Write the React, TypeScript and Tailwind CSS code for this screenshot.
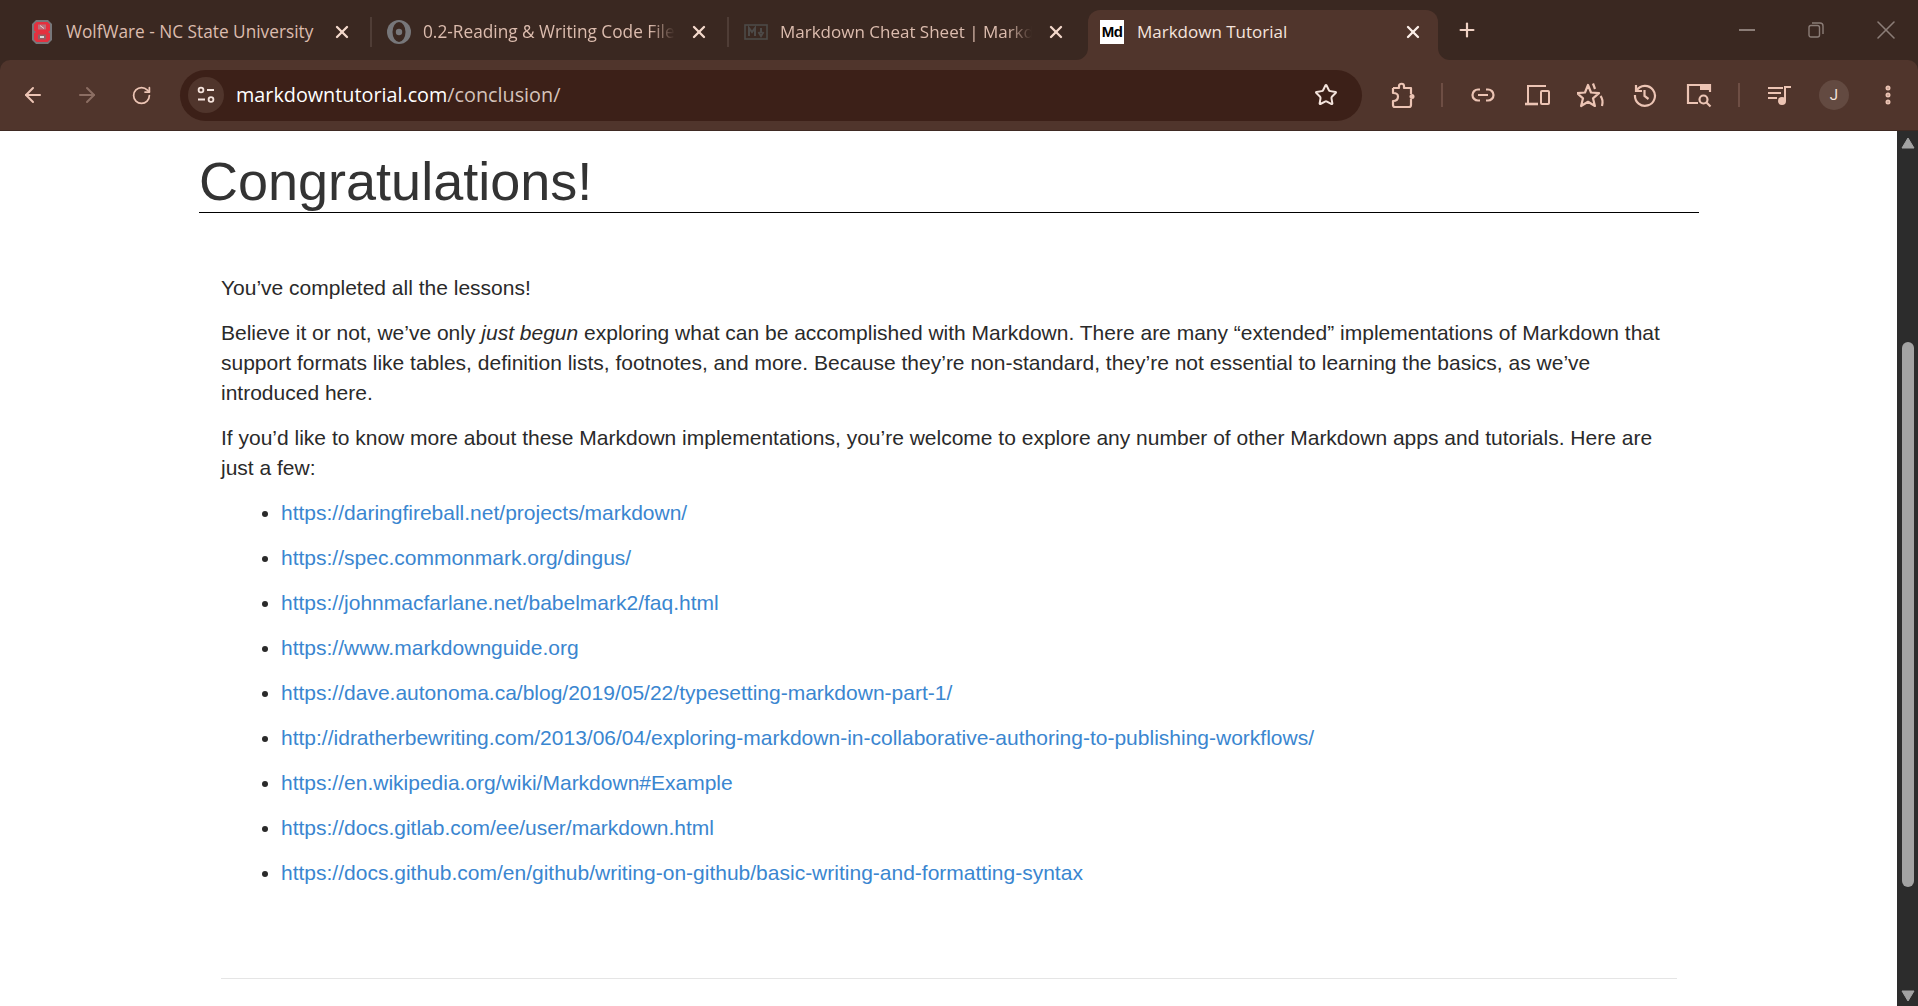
import { ArrowLeft, ArrowRight, RotateCw, X, Plus, Star, EllipsisVertical } from "lucide-react";
import type { ReactNode } from "react";

const links = [
  "https://daringfireball.net/projects/markdown/",
  "https://spec.commonmark.org/dingus/",
  "https://johnmacfarlane.net/babelmark2/faq.html",
  "https://www.markdownguide.org",
  "https://dave.autonoma.ca/blog/2019/05/22/typesetting-markdown-part-1/",
  "http://idratherbewriting.com/2013/06/04/exploring-markdown-in-collaborative-authoring-to-publishing-workflows/",
  "https://en.wikipedia.org/wiki/Markdown#Example",
  "https://docs.gitlab.com/ee/user/markdown.html",
  "https://docs.github.com/en/github/writing-on-github/basic-writing-and-formatting-syntax",
];

function NcStateIcon() {
  return (
    <svg width="20" height="24" viewBox="0 0 20 24">
      <path d="M4 0h12l4 4v16l-4 4H4l-4-4V4z" fill="#77777a" />
      <path d="M4.5 2h11l2.5 2.5v6L16 12l2 1.5v6L15.5 22h-11L2 19.5v-6L4 12l-2-1.500v-6z" fill="#e4303f" />
      <rect x="6" y="4.5" width="8" height="5" fill="#b8707a" />
      <rect x="6" y="14.5" width="8" height="5" fill="#8f6065" />
      <rect x="8" y="16" width="4" height="2" fill="#d9d9d9" />
      <path d="M8 5.500l4 3" stroke="#e8d0d2" strokeWidth="1" />
    </svg>
  );
}

function RingIcon() {
  return (
    <svg width="24" height="24" viewBox="0 0 24 24">
      <circle cx="12" cy="12" r="12" fill="#77777a" />
      <ellipse cx="12" cy="12" rx="6.5" ry="10" fill="#3a2821" />
      <circle cx="12" cy="12" r="3.2" fill="#77777a" />
    </svg>
  );
}

function MdIcon() {
  return (
    <svg width="24" height="16" viewBox="0 0 24 16" fill="none" stroke="#4d4a48" strokeWidth="1.6">
      <rect x="1" y="1" width="22" height="14" />
      <path d="M5 12V4l3 4 3-4v8" strokeWidth="2" />
      <path d="M17 4v5M14.5 8 17 12l2.5-4" strokeWidth="2" />
    </svg>
  );
}

function MdActiveIcon() {
  return (
    <div className="w-6 h-6 bg-white flex items-center justify-center text-black text-[15px] font-bold tracking-[-0.5px] [font-family:'Liberation_Sans',sans-serif]">
      Md
    </div>
  );
}

function Tab({ icon, title, sep, fade, size }: { icon: ReactNode; title: string; sep?: boolean; fade?: boolean; size: string }) {
  return (
    <div className="flex items-center w-[357px] h-[50px] shrink-0 pb-[6px]">
      <div className="w-[28px] flex justify-center shrink-0">{icon}</div>
      <span
        className={
          "text-[#dcbcae] whitespace-nowrap overflow-hidden w-[252px] ml-[10px] " +
          size +
          (fade ? " [mask-image:linear-gradient(to_right,black_90%,transparent)]" : "")
        }
      >
        {title}
      </span>
      <X size={20} strokeWidth={2.8} className="text-[#f3d8cb] ml-[14px] shrink-0" />
      {sep && <div className="w-[2px] h-[30px] bg-[#4f3d36] ml-[18px] shrink-0" />}
    </div>
  );
}

function ToolIcon({ children }: { children: ReactNode }) {
  return <div className="w-[54px] h-[40px] flex items-center justify-center shrink-0 text-[#ecc4b4]">{children}</div>;
}

function Sep() {
  return <div className="w-[2px] h-[24px] bg-[#6e4e44] shrink-0" />;
}

export default function App() {
  return (
    <div className="h-[1006px] w-[1918px] overflow-hidden flex flex-col bg-white [font-family:'Open_Sans',sans-serif]">
      {/* tab strip */}
      <div className="h-[60px] bg-[#3a2821] flex items-end pl-[28px] shrink-0">
        <Tab icon={<NcStateIcon />} title="WolfWare - NC State University" sep size="text-[17.25px]" />
        <Tab icon={<RingIcon />} title="0.2-Reading & Writing Code Files" sep fade size="text-[17.25px]" />
        <Tab icon={<MdIcon />} title="Markdown Cheat Sheet | Markdown Guide" fade size="text-[17px]" />
        <div className="relative h-[50px] w-[350px] bg-[#50352c] rounded-t-[12px] flex items-center pl-[12px] pb-[6px] -ml-[11px] shrink-0">
          <svg width="12" height="12" viewBox="0 0 12 12" className="absolute bottom-0 -left-[12px]">
            <path d="M12 0V12H0A12 12 0 0 0 12 0z" fill="#50352c" />
          </svg>
          <MdActiveIcon />
          <span className="text-[#f5e4dd] text-[17px] ml-[13px] w-[266px]">Markdown Tutorial</span>
          <X size={20} strokeWidth={2.8} className="text-[#fbeee8]" />
          <svg width="12" height="12" viewBox="0 0 12 12" className="absolute bottom-0 -right-[12px]">
            <path d="M0 0V12H12A12 12 0 0 1 0 0z" fill="#50352c" />
          </svg>
        </div>
        <Plus size={22} strokeWidth={2.4} className="text-[#f0d2c5] ml-[18px] mb-[19px]" />
        <div className="ml-auto flex items-center h-[60px]">
          <svg width="16" height="2" viewBox="0 0 16 2" className="mr-[53px]"><rect width="16" height="2" fill="#8b7d77" /></svg>
          <svg width="16" height="16" viewBox="0 0 16 16" fill="none" stroke="#8b7d77" strokeWidth="1.4" className="mr-[46px]">
            <rect x="1" y="3.5" width="10.5" height="11.5" rx="2" />
            <path d="M4 1h8a3 3 0 0 1 3 3v8" />
          </svg>
          <X size={32} strokeWidth={1.2} className="mr-[16px] text-[#8b7d77]" />
        </div>
      </div>

      {/* toolbar */}
      <div className="h-[71px] shrink-0 bg-[#3a2821]">
        <div className="h-[71px] bg-[#50352c] rounded-t-[10px] border-b border-[#3f2a23] flex items-center pl-[6px]">
          <ToolIcon><ArrowLeft size={24} strokeWidth={2} /></ToolIcon>
          <ToolIcon><ArrowRight size={24} strokeWidth={2} className="text-[#8c6e63]" /></ToolIcon>
          <ToolIcon><RotateCw size={21} strokeWidth={2} /></ToolIcon>
          <div className="ml-[12px] w-[1182px] h-[51px] rounded-full bg-[#3c2018] flex items-center pl-[8px] shrink-0">
            <div className="w-[36px] h-[36px] rounded-full bg-[#50352c] flex items-center justify-center">
              <svg width="20" height="20" viewBox="0 0 20 20" fill="none" stroke="#f5e4dd" strokeWidth="1.8">
                <circle cx="5" cy="5" r="2.4" />
                <path d="M11 5h7M2 14.5h7" />
                <circle cx="15" cy="14.5" r="2.4" />
              </svg>
            </div>
            <span className="ml-[12px] text-[19.8px] text-white">
              markdowntutorial.com<span className="text-[#d5c3bb]">/conclusion/</span>
            </span>
            <Star size={24} strokeWidth={2} className="text-[#f3e3dc] ml-auto mr-[24px]" />
          </div>
          <div className="ml-[14px]">
            <ToolIcon>
              <svg width="26" height="28" viewBox="0 0 26 28" fill="none" stroke="currentColor" strokeWidth="2.2" strokeLinejoin="round">
                <path d="M3 7h6V5c0-3 5-3 5 0v2h7v6" />
                <path d="M21 18v6a2 2 0 0 1-2 2H5a2 2 0 0 1-2-2v-4c4 0 5-2 5-4.500S7 12 3 12V7" />
                <circle cx="22" cy="15.500" r="2.500" fill="currentColor" stroke="none" />
              </svg>
            </ToolIcon>
          </div>
          <div className="w-[11px]" />
          <Sep />
          <div className="w-[13px]" />
          <ToolIcon>
            <svg width="24" height="14" viewBox="0 0 24 14" fill="none" stroke="currentColor" strokeWidth="2.2">
              <path d="M9 1.5H7a5.5 5.5 0 0 0 0 11h2M15 1.5h2a5.5 5.5 0 0 1 0 11h-2M7 7h10" />
            </svg>
          </ToolIcon>
          <ToolIcon>
            <svg width="25" height="22" viewBox="0 0 25 22" fill="none" stroke="currentColor" strokeWidth="2">
              <path d="M3 19V2h18" />
              <path d="M0 20h13" strokeWidth="2.6" />
              <rect x="16" y="7" width="8" height="13" rx="1" />
            </svg>
          </ToolIcon>
          <ToolIcon>
            <svg width="28" height="28" viewBox="0 0 28 28" fill="none" stroke="currentColor" strokeWidth="2.200" strokeLinejoin="round">
              <path d="M11 4l3 7.500 8 .6-6 5.200 1.900 7.700-6.900-4.200-6.900 4.200 1.900-7.700-6-5.200 8-.6z" />
              <path d="M16 2.500l2 5.500M23.500 15c2.500 3 2.500 6 1.500 10" />
            </svg>
          </ToolIcon>
          <ToolIcon>
            <svg width="24" height="24" viewBox="0 0 24 24" fill="none" stroke="currentColor" strokeWidth="2.2">
              <path d="M3.5 7.5A10 10 0 1 1 2 12" />
              <path d="M3 2v6h6" />
              <path d="M11.5 7v6l4 3" />
            </svg>
          </ToolIcon>
          <ToolIcon>
            <svg width="26" height="26" viewBox="0 0 26 26" fill="none" stroke="currentColor" strokeWidth="2.2">
              <path d="M12 21H2V3h22v7" />
              <rect x="14" y="2" width="10" height="6" fill="currentColor" stroke="none" />
              <circle cx="17.5" cy="17.5" r="4" />
              <path d="M20.5 20.5l4 4" />
            </svg>
          </ToolIcon>
          <div className="w-[12px]" />
          <Sep />
          <div className="w-[13px]" />
          <ToolIcon>
            <svg width="24" height="22" viewBox="0 0 24 22" fill="none" stroke="currentColor" strokeWidth="2">
              <path d="M0 4h15M0 9h13M0 14h9" />
              <path d="M17 17V3h6" />
              <circle cx="14" cy="17" r="4" fill="currentColor" stroke="none" />
            </svg>
          </ToolIcon>
          <ToolIcon>
            <div className="w-[30px] h-[30px] rounded-full bg-[#634a41] flex items-center justify-center text-[#f3e3dc] text-[15px] [font-family:'Roboto',sans-serif]">J</div>
          </ToolIcon>
          <ToolIcon>
            <EllipsisVertical size={24} strokeWidth={3} />
          </ToolIcon>
        </div>
      </div>

      {/* page + scrollbar */}
      <div className="flex-1 flex min-h-0 [font-family:'Liberation_Sans',sans-serif]">
        <div className="flex-1 min-w-0 pl-[199px]">
          <div className="w-[1500px]">
            <h1 className="text-[54px] pt-[10px] leading-[81px] h-[82px] text-[#333333] border-b border-black">Congratulations!</h1>
            <div className="px-[22px] pt-[60px] text-[21px] leading-[30px] text-[#2a2a2a]">
              <p className="mb-[15px]">You’ve completed all the lessons!</p>
              <p className="mb-[15px]">
                Believe it or not, we’ve only <em>just begun</em> exploring what can be accomplished with Markdown. There are many “extended” implementations of Markdown that support formats like tables, definition lists, footnotes, and more. Because they’re non-standard, they’re not essential to learning the basics, as we’ve introduced here.
              </p>
              <p className="mb-[15px]">
                If you’d like to know more about these Markdown implementations, you’re welcome to explore any number of other Markdown apps and tutorials. Here are just a few:
              </p>
              <ul className="list-disc pl-[60px]">
                {links.map((href) => (
                  <li key={href} className="mb-[15px]">
                    <a className="text-[#3a86d0]" href={href}>{href}</a>
                  </li>
                ))}
              </ul>
              <hr className="mt-[90px] border-[#e5e5e5]" />
            </div>
          </div>
        </div>
        <div className="w-[21px] shrink-0 bg-[#2c2c2c] flex flex-col items-center">
          <svg width="14" height="12" viewBox="0 0 14 12" className="mt-[6px] shrink-0"><path d="M7 1 L13 11 H1 Z" fill="#a3a3a3" stroke="#a3a3a3" strokeLinejoin="round" /></svg>
          <div className="w-[12px] h-[545px] mt-[193px] rounded-[6px] bg-[#a3a3a3] shrink-0" />
          <svg width="14" height="12" viewBox="0 0 14 12" className="mt-auto mb-[4px] shrink-0"><path d="M1 1 H13 L7 11 Z" fill="#a3a3a3" stroke="#a3a3a3" strokeLinejoin="round" /></svg>
        </div>
      </div>
    </div>
  );
}
